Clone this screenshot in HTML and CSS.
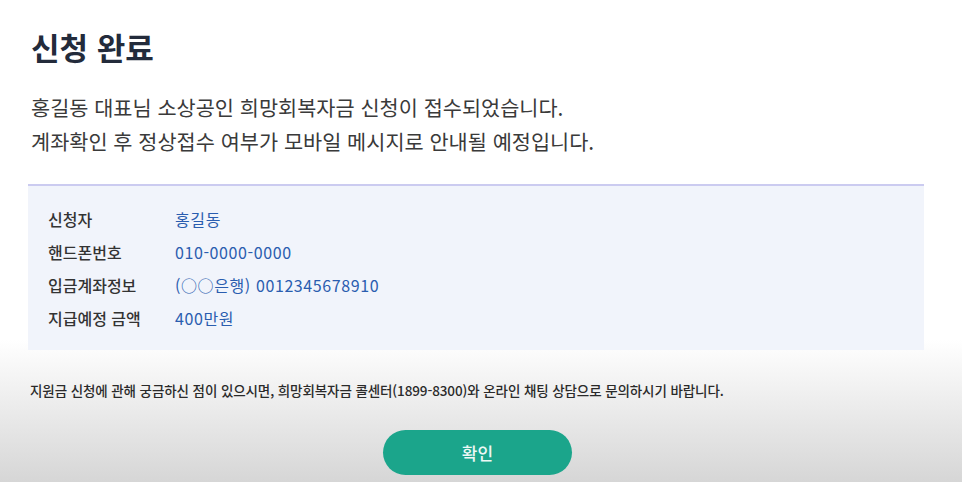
FILE: index.html
```html
<!DOCTYPE html>
<html lang="ko">
<head>
<meta charset="utf-8">
<title>신청 완료</title>
<link rel="stylesheet" href="styles.css">
</head>
<body>
<main class="page">
  <h1 class="title">신청 완료</h1>
  <p class="message">홍길동 대표님 소상공인 희망회복자금 신청이 접수되었습니다.<br>계좌확인 후 정상접수 여부가 모바일 메시지로 안내될 예정입니다.</p>
  <section class="info">
    <dl class="info-list">
      <div class="row"><dt>신청자</dt><dd>홍길동</dd></div>
      <div class="row"><dt>핸드폰번호</dt><dd>010-0000-0000</dd></div>
      <div class="row"><dt>입금계좌정보</dt><dd>(○○은행) 0012345678910</dd></div>
      <div class="row"><dt>지급예정 금액</dt><dd>400만원</dd></div>
    </dl>
  </section>
  <p class="notice">지원금 신청에 관해 궁금하신 점이 있으시면, 희망회복자금 콜센터(1899-8300)와 온라인 채팅 상담으로 문의하시기 바랍니다.</p>
  <div class="actions">
    <button class="btn-confirm" type="button">확인</button>
  </div>
</main>
</body>
</html>
```
FILE: styles.css
```css
html, body {
  margin: 0;
  padding: 0;
  height: 100%;
}
body {
  font-family: "Noto Sans CJK KR", "Noto Sans", sans-serif;
  background: linear-gradient(to bottom, #ffffff 0, #ffffff 340px, #d6d6d6 482px);
  color: #333;
  overflow: hidden;
}
.page {
  width: 896px;
  margin-left: 28px;
  padding-top: 26px;
}
.title {
  margin: 0;
  padding-left: 3px;
  font-size: 31px;
  line-height: 42px;
  font-weight: 700;
  color: #232b3b;
}
.message {
  margin: 22px 0 0;
  padding-left: 3px;
  font-size: 20.8px;
  line-height: 34px;
  color: #3a3a3a;
}
.info {
  margin-top: 26px;
  border-top: 2px solid #cbcbf0;
  background: #f1f4fb;
  padding: 17px 20px 15px;
}
.info-list {
  margin: 0;
}
.row {
  display: flex;
  line-height: 33px;
  font-size: 16px;
}
.row dt {
  width: 127px;
  color: #333;
  font-weight: 500;
}
.row dd {
  margin: 0;
  color: #2a5daf;
  letter-spacing: 0.6px;
}
.notice {
  margin: 30px 0 0;
  padding-left: 2px;
  font-size: 13.5px;
  line-height: 20px;
  color: #2a2a2a;
  font-weight: 500;
  letter-spacing: -0.1px;
  white-space: nowrap;
}
.actions {
  margin-top: 30px;
  display: flex;
  justify-content: center;
  padding-left: 3px;
}
.btn-confirm {
  width: 189px;
  height: 45px;
  border: 0;
  border-radius: 23px;
  background: #1ba58b;
  color: #eef8f5;
  font-family: inherit;
  font-size: 17px;
  font-weight: 500;
}
```
